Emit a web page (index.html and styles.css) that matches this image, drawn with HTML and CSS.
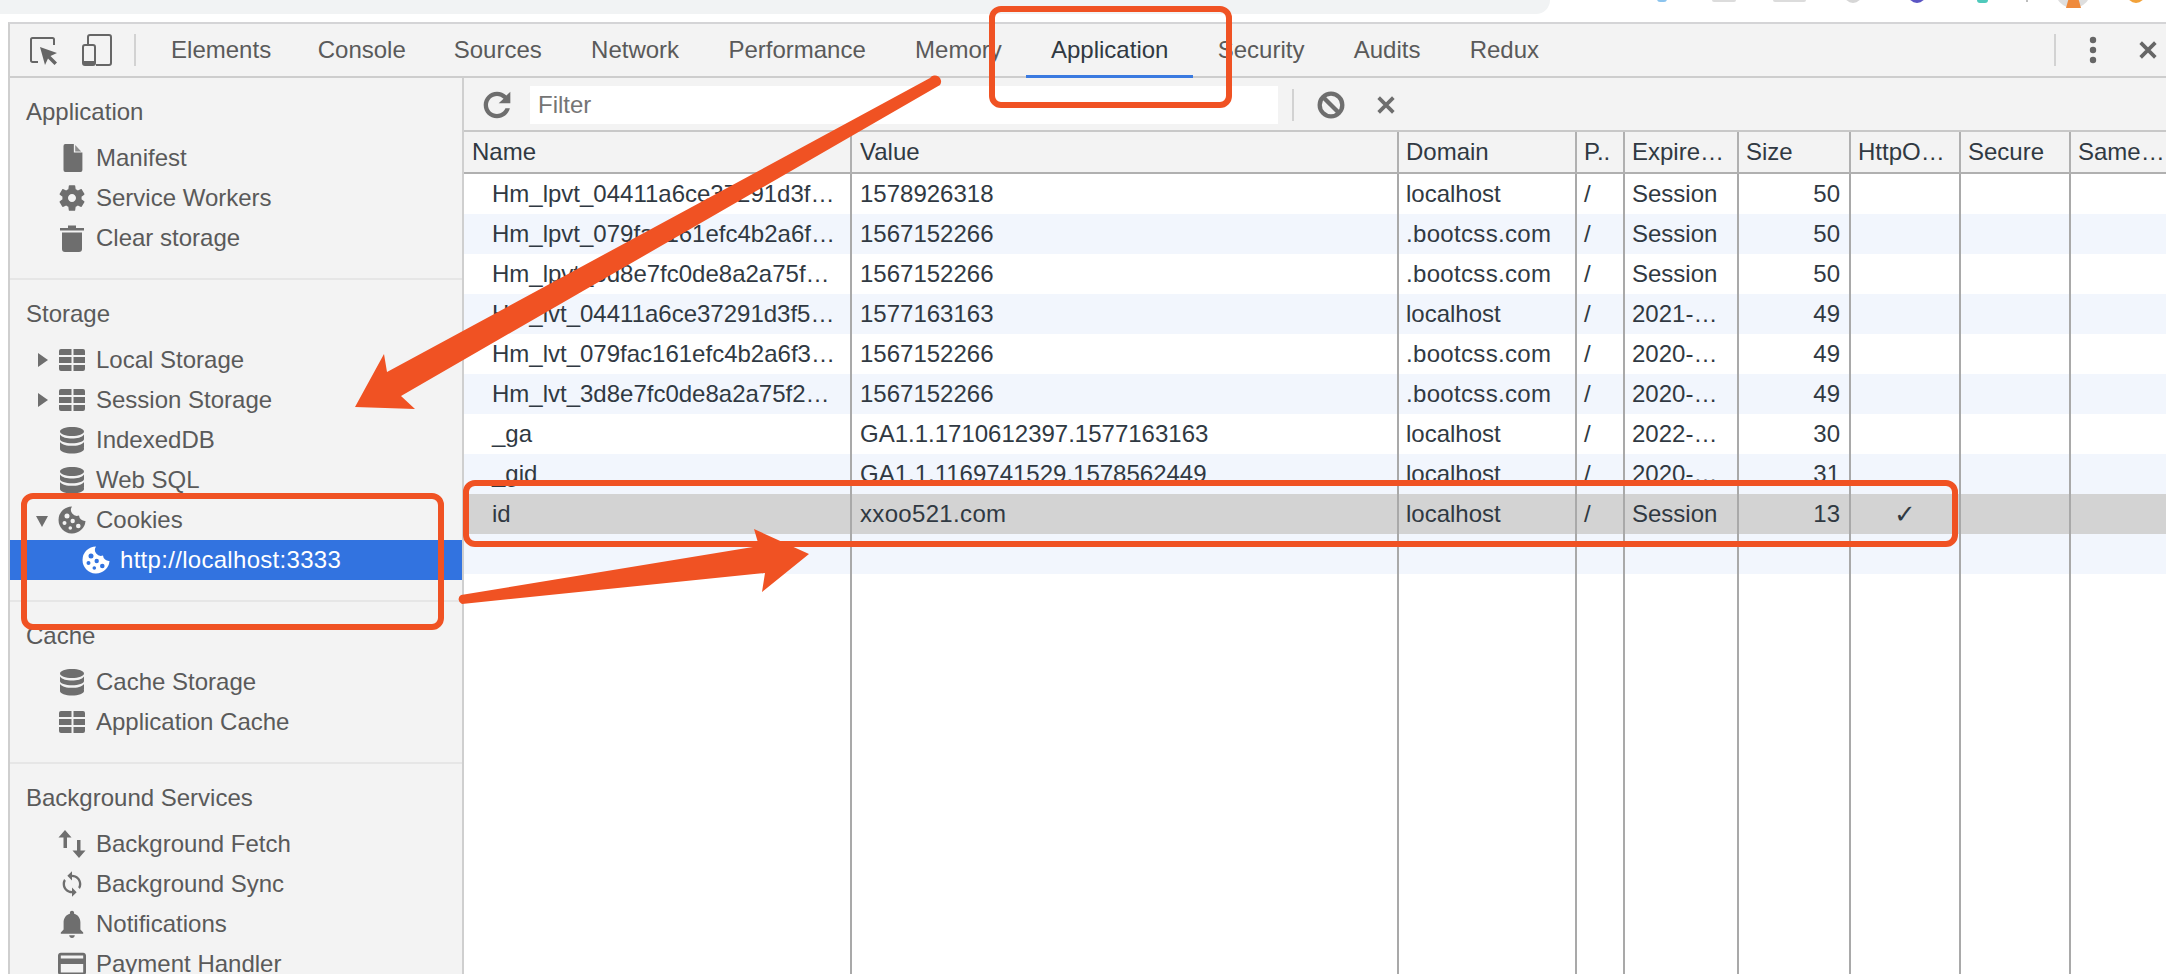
FILE: index.html
```
<!DOCTYPE html>
<html lang="en">
<head>
<meta charset="utf-8">
<title>DevTools - Application - Cookies</title>
<link rel="stylesheet" href="styles.css">
</head>
<body>
<svg class="sprite" aria-hidden="true">
  <symbol id="i-file" viewBox="0 0 28 28"><path d="M5 2a2 2 0 0 1 2-2h9.500v8.500H26V26a2 2 0 0 1-2 2H7a2 2 0 0 1-2-2z" transform="translate(1 0) scale(.9 1)"/><path d="M17.200 1l6 6.500h-6z" opacity=".75"/></symbol>
  <symbol id="i-gear" viewBox="1.500 1.500 21 21"><path d="M19.140 12.940c.04-.3.06-.61.06-.94 0-.32-.02-.64-.07-.94l2.030-1.580c.18-.14.23-.41.12-.61l-1.920-3.320c-.12-.22-.37-.29-.59-.22l-2.390.96c-.5-.38-1.030-.7-1.620-.94l-.36-2.540c-.04-.24-.24-.41-.48-.41h-3.840c-.24 0-.43.17-.47.41l-.36 2.540c-.59.24-1.130.57-1.620.94l-2.390-.96c-.22-.08-.47 0-.59.22L2.740 8.870c-.12.21-.08.47.12.61l2.030 1.580c-.05.3-.09.63-.09.94s.02.64.07.94l-2.030 1.580c-.18.14-.23.41-.12.61l1.920 3.320c.12.22.37.29.59.22l2.390-.96c.5.38 1.030.7 1.620.94l.36 2.540c.05.24.24.41.48.41h3.840c.24 0 .44-.17.47-.41l.36-2.540c.59-.24 1.130-.56 1.620-.94l2.390.96c.22.08.47 0 .59-.22l1.920-3.320c.12-.22.07-.47-.12-.61l-2.010-1.580zM12 15c-1.650 0-3-1.350-3-3s1.350-3 3-3 3 1.350 3 3-1.350 3-3 3z"/></symbol>
  <symbol id="i-trash" viewBox="0 0 28 28"><path d="M2 4h24v2.500H2zM10 1.500h8V4h-8zM4 8.500h20V25a3 3 0 0 1-3 3H7a3 3 0 0 1-3-3z"/></symbol>
  <symbol id="i-table" viewBox="0 0 28 28"><path d="M3 3h10.500v6H1V5a2 2 0 0 1 2-2zM15.500 3H25a2 2 0 0 1 2 2v4H15.500zM1 11h12.500v6H1zM15.500 11H27v6H15.500zM1 19h12.500v6H3a2 2 0 0 1-2-2zM15.500 19H27v4a2 2 0 0 1-2 2h-9.500z"/></symbol>
  <symbol id="i-db" viewBox="0 0 28 28"><path d="M14 1C7.500 1 2 3 2 5.500S7.500 10 14 10s12-2 12-4.500S20.500 1 14 1zM2 8.500c2 3 7 4 12 4s10-1 12-4V13c0 2.500-5.500 4.300-12 4.300S2 15.500 2 13zM2 16c2 3 7 3.800 12 3.800S24 19 26 16v4.500c0 .5 0 1-.2 1.500H26v1c0 2.500-5.500 4.500-12 4.500S2 25.500 2 23z"/></symbol>
  <symbol id="i-cookie" viewBox="0 0 28 28"><path fill-rule="evenodd" d="M14 .5A13.500 13.500 0 1 0 27.500 15a6 6 0 0 1-6.500-5.500A6 6 0 0 1 14 .5zM6.500 10a2.500 2.500 0 1 0 5 0a2.500 2.500 0 1 0-5 0zM4.500 17a2 2 0 1 0 4 0a2 2 0 1 0-4 0zM12.500 15a2.200 2.200 0 1 0 4.400 0a2.200 2.200 0 1 0-4.400 0zM18 20a2.300 2.300 0 1 0 4.600 0a2.300 2.300 0 1 0-4.600 0zM10.500 22a1.800 1.800 0 1 0 3.600 0a1.800 1.800 0 1 0-3.600 0z"/></symbol>
  <symbol id="i-fetch" viewBox="0 0 28 28"><path d="M7 0l6.500 7.500H9V18H5.500V7.500H.5zM21 28l-6.500-7.500H19V10h3.500v10.500H27.500z"/></symbol>
  <symbol id="i-sync" viewBox="0 0 24 24"><path d="M12 4V1L8 5l4 4V6c3.310 0 6 2.690 6 6 0 1.010-.25 1.970-.7 2.800l1.460 1.460C19.540 15.030 20 13.570 20 12c0-4.420-3.580-8-8-8zm0 14c-3.310 0-6-2.690-6-6 0-1.010.25-1.970.7-2.800L5.240 7.740C4.460 8.970 4 10.430 4 12c0 4.420 3.580 8 8 8v3l4-4-4-4v3z"/></symbol>
  <symbol id="i-bell" viewBox="2 2 20 20"><path d="M12 22c1.100 0 2-.9 2-2h-4c0 1.100.89 2 2 2zm6-6v-5c0-3.070-1.640-5.640-4.500-6.320V4c0-.83-.67-1.500-1.500-1.500s-1.500.67-1.500 1.500v.68C7.630 5.360 6 7.920 6 11v5l-2 2v1h16v-1l-2-2z"/></symbol>
  <symbol id="i-card" viewBox="2 2 20 20"><path d="M20 4H4c-1.110 0-1.990.89-1.990 2L2 18c0 1.110.89 2 2 2h16c1.110 0 2-.89 2-2V6c0-1.110-.89-2-2-2zm0 14H4v-6h16v6zm0-10H4V6h16v2z"/></symbol>
  <symbol id="i-close" viewBox="0 0 24 24"><path d="M4 4l16 16M20 4L4 20" fill="none" stroke="currentColor" stroke-width="4"/></symbol>
</svg>

<div class="browser-strip">
  <div class="tab-strip"></div>
  <svg class="browser-icons" width="616" height="22" viewBox="1550 0 616 22" aria-hidden="true">
    <rect x="1657" y="-6" width="10" height="8" rx="3" fill="#8cc4ee"/>
    <rect x="1712" y="-6" width="24" height="8" rx="2" fill="#dcdcdc"/>
    <rect x="1773" y="-6" width="33" height="8" rx="2" fill="#dcdcdc"/>
    <circle cx="1853" cy="-6" r="9" fill="#d6d6d6"/>
    <circle cx="1917" cy="-6" r="9" fill="#5b55c4"/>
    <rect x="1977" y="-4" width="11" height="7" rx="3" fill="#4fc9bb"/>
    <rect x="2026" y="-2" width="2" height="4" fill="#bdbdbd"/>
    <circle cx="2073" cy="-10" r="18" fill="#dedede"/>
    <path d="M2066 8l5-18h5l5 18z" fill="#ef8a3c"/>
    <circle cx="2136" cy="-6" r="9" fill="#f2a23a"/>
  </svg>
</div>

<div class="devtools">
  <header class="toolbar">
    <svg class="tool-inspect" width="28" height="28" viewBox="0 0 28 28" aria-hidden="true">
      <path d="M8 25H2.500a1.500 1.500 0 0 1-1.500-1.500v-21A1.500 1.500 0 0 1 2.500 1h20A1.500 1.500 0 0 1 24 2.500V8" fill="none" stroke="currentColor" stroke-width="2"/>
      <path d="M10 10l17 6-6.500 3 6.500 6.500-2.500 2.500-6.500-6.500-3 6.500z"/>
    </svg>
    <svg class="tool-device" width="30" height="32" viewBox="0 0 30 32" aria-hidden="true">
      <path d="M6 10V3a2 2 0 0 1 2-2h19a2 2 0 0 1 2 2v26a2 2 0 0 1-2 2H14" fill="none" stroke="currentColor" stroke-width="2"/>
      <rect x="1" y="11" width="12" height="20" rx="2" fill="none" stroke="currentColor" stroke-width="2"/>
      <rect x="1" y="27" width="12" height="4"/>
    </svg>
    <span class="tool-sep"></span>
    <nav class="tabs">
      <span class="tab tab-tight">Elements</span>
      <span class="tab tab-tight">Console</span>
      <span class="tab">Sources</span>
      <span class="tab">Network</span>
      <span class="tab">Performance</span>
      <span class="tab">Memory</span>
      <span class="tab tab-active">Application</span>
      <span class="tab">Security</span>
      <span class="tab">Audits</span>
      <span class="tab">Redux</span>
    </nav>
    <span class="tool-sep tool-sep-right"></span>
    <svg class="tool-more" width="8" height="28" viewBox="0 0 8 28" aria-hidden="true"><circle cx="4" cy="4" r="3.200"/><circle cx="4" cy="14" r="3.200"/><circle cx="4" cy="24" r="3.200"/></svg>
    <svg class="tool-close" width="22" height="22" aria-hidden="true"><use href="#i-close"/></svg>
  </header>

  <div class="panel">
    <aside class="sidebar">
      <section class="side-section">
        <h2 class="side-title">Application</h2>
        <div class="item"><span class="arrow"></span><svg class="ico"><use href="#i-file"/></svg><span>Manifest</span></div>
        <div class="item"><span class="arrow"></span><svg class="ico"><use href="#i-gear"/></svg><span>Service Workers</span></div>
        <div class="item"><span class="arrow"></span><svg class="ico"><use href="#i-trash"/></svg><span>Clear storage</span></div>
      </section>
      <section class="side-section">
        <h2 class="side-title">Storage</h2>
        <div class="item"><span class="arrow arrow-right"></span><svg class="ico"><use href="#i-table"/></svg><span>Local Storage</span></div>
        <div class="item"><span class="arrow arrow-right"></span><svg class="ico"><use href="#i-table"/></svg><span>Session Storage</span></div>
        <div class="item"><span class="arrow"></span><svg class="ico"><use href="#i-db"/></svg><span>IndexedDB</span></div>
        <div class="item"><span class="arrow"></span><svg class="ico"><use href="#i-db"/></svg><span>Web SQL</span></div>
        <div class="item"><span class="arrow arrow-down"></span><svg class="ico"><use href="#i-cookie"/></svg><span>Cookies</span></div>
        <div class="item item-child item-selected"><span class="arrow"></span><svg class="ico"><use href="#i-cookie"/></svg><span>http://localhost:3333</span></div>
      </section>
      <section class="side-section">
        <h2 class="side-title">Cache</h2>
        <div class="item"><span class="arrow"></span><svg class="ico"><use href="#i-db"/></svg><span>Cache Storage</span></div>
        <div class="item"><span class="arrow"></span><svg class="ico"><use href="#i-table"/></svg><span>Application Cache</span></div>
      </section>
      <section class="side-section">
        <h2 class="side-title">Background Services</h2>
        <div class="item"><span class="arrow"></span><svg class="ico"><use href="#i-fetch"/></svg><span>Background Fetch</span></div>
        <div class="item"><span class="arrow"></span><svg class="ico"><use href="#i-sync"/></svg><span>Background Sync</span></div>
        <div class="item"><span class="arrow"></span><svg class="ico"><use href="#i-bell"/></svg><span>Notifications</span></div>
        <div class="item"><span class="arrow"></span><svg class="ico"><use href="#i-card"/></svg><span>Payment Handler</span></div>
      </section>
    </aside>

    <main class="content">
      <div class="filter-bar">
        <svg class="filter-refresh" width="30" height="30" viewBox="3 3 18 18" aria-hidden="true"><path d="M17.650 6.350C16.200 4.900 14.210 4 12 4c-4.420 0-7.990 3.580-7.990 8s3.570 8 7.990 8c3.730 0 6.840-2.550 7.730-6h-2.680c-.82 2.030-2.740 3.400-5.050 3.400-3.010 0-5.400-2.390-5.400-5.400s2.390-5.400 5.400-5.400c1.560 0 2.940.64 3.920 1.680L13 11h7V4l-2.350 2.350z"/></svg>
        <div class="filter-input">Filter</div>
        <span class="filter-sep"></span>
        <svg class="filter-block" width="28" height="28" viewBox="0 0 26 26" aria-hidden="true"><circle cx="13" cy="13" r="10.500" fill="none" stroke="currentColor" stroke-width="4"/><path d="M6 6l14 14" stroke="currentColor" stroke-width="4"/></svg>
        <svg class="filter-clear" width="22" height="22" aria-hidden="true"><use href="#i-close"/></svg>
      </div>
      <div class="grid-wrap">
        <table class="grid">
          <colgroup>
            <col class="c-name"><col class="c-value"><col class="c-domain"><col class="c-path"><col class="c-exp"><col class="c-size"><col class="c-http"><col class="c-sec"><col class="c-same">
          </colgroup>
          <thead>
            <tr><th>Name</th><th>Value</th><th>Domain</th><th>P..</th><th>Expire…</th><th>Size</th><th>HttpO…</th><th>Secure</th><th>Same…</th></tr>
          </thead>
          <tbody>
            <tr><td class="name">Hm_lpvt_04411a6ce37291d3f…</td><td>1578926318</td><td>localhost</td><td>/</td><td>Session</td><td class="num">50</td><td></td><td></td><td></td></tr>
            <tr class="odd"><td class="name">Hm_lpvt_079fac161efc4b2a6f…</td><td>1567152266</td><td class="wide">.bootcss.com</td><td>/</td><td>Session</td><td class="num">50</td><td></td><td></td><td></td></tr>
            <tr><td class="name">Hm_lpvt_3d8e7fc0de8a2a75f…</td><td>1567152266</td><td class="wide">.bootcss.com</td><td>/</td><td>Session</td><td class="num">50</td><td></td><td></td><td></td></tr>
            <tr class="odd"><td class="name">Hm_lvt_04411a6ce37291d3f5…</td><td>1577163163</td><td>localhost</td><td>/</td><td>2021-…</td><td class="num">49</td><td></td><td></td><td></td></tr>
            <tr><td class="name">Hm_lvt_079fac161efc4b2a6f3…</td><td>1567152266</td><td class="wide">.bootcss.com</td><td>/</td><td>2020-…</td><td class="num">49</td><td></td><td></td><td></td></tr>
            <tr class="odd"><td class="name">Hm_lvt_3d8e7fc0de8a2a75f2…</td><td>1567152266</td><td class="wide">.bootcss.com</td><td>/</td><td>2020-…</td><td class="num">49</td><td></td><td></td><td></td></tr>
            <tr><td class="name">_ga</td><td>GA1.1.1710612397.1577163163</td><td>localhost</td><td>/</td><td>2022-…</td><td class="num">30</td><td></td><td></td><td></td></tr>
            <tr class="odd"><td class="name">_gid</td><td>GA1.1.1169741529.1578562449</td><td>localhost</td><td>/</td><td>2020-…</td><td class="num">31</td><td></td><td></td><td></td></tr>
            <tr class="selected"><td class="name">id</td><td class="wide">xxoo521.com</td><td>localhost</td><td>/</td><td>Session</td><td class="num">13</td><td class="check">✓</td><td></td><td></td></tr>
            <tr class="odd"><td></td><td></td><td></td><td></td><td></td><td></td><td></td><td></td><td></td></tr>
            <tr class="filler"><td></td><td></td><td></td><td></td><td></td><td></td><td></td><td></td><td></td></tr>
          </tbody>
        </table>
      </div>
    </main>
  </div>
</div>

<svg class="annotations" width="2166" height="974" viewBox="0 0 2166 974" aria-hidden="true">
  <rect class="note-box" x="992" y="9" width="237" height="96" rx="9"/>
  <rect class="note-box" x="24" y="496" width="417" height="131" rx="9"/>
  <rect class="note-box" x="466" y="483" width="1489" height="61" rx="9"/>
  <path class="note-arrow" d="M930 78a6 6 0 0 1 10 7L401 396l14 13-60-2 29-53 3 18z"/>
  <path class="note-arrow" d="M461 595l298-49-5-17 55 25-47 38 3-19-303 31a5 5 0 0 1-1-9z"/>
</svg>
</body>
</html>
```
FILE: styles.css
```
* {
  box-sizing: border-box;
}

html,
body {
  margin: 0;
  height: 100%;
}

body {
  position: relative;
  display: flex;
  flex-direction: column;
  width: 2166px;
  height: 974px;
  overflow: hidden;
  background: #fff;
  font-family: "Liberation Sans", Arial, sans-serif;
  font-size: 24px;
  color: #5a5a5a;
}

.sprite {
  display: none;
}

/* browser chrome remnant */
.browser-strip {
  display: flex;
  flex: none;
  height: 22px;
}

.tab-strip {
  width: 1550px;
  height: 14px;
  background: #f1f3f4;
  border-bottom-right-radius: 14px;
}

.browser-icons {
  flex: none;
}

/* devtools frame */
.devtools {
  display: flex;
  flex: 1;
  flex-direction: column;
  min-height: 0;
  margin-left: 8px;
  border-top: 2px solid #d4d4d6;
  border-left: 2px solid #cfcfcf;
}

.toolbar {
  display: flex;
  flex: none;
  align-items: center;
  height: 54px;
  background: #f3f3f3;
  border-bottom: 2px solid #cdcdcd;
  fill: #666;
  color: #666;
}

.tool-inspect {
  flex: none;
  margin: 1px 0 0 20px;
}

.tool-device {
  flex: none;
  margin-left: 24px;
}

.tool-sep {
  flex: none;
  width: 2px;
  height: 32px;
  margin-left: 22px;
  background: #d2d2d2;
}

.tabs {
  display: flex;
  flex: 1;
  align-self: stretch;
  margin-left: 11.800px;
}

.tab {
  display: flex;
  align-items: center;
  margin-bottom: -2px;
  padding: 0 24.650px 2px;
  color: #5a5a5a;
  white-space: nowrap;
}

.tab-tight {
  padding-right: 23.300px;
  padding-left: 23.300px;
}

.tab-active {
  border-bottom: 3px solid #3a7ae0;
  padding-bottom: 0;
  color: #303942;
}

.tool-sep-right {
  margin: 0 33px 0 0;
}

.tool-more {
  flex: none;
  margin-right: 40px;
}

.tool-close {
  flex: none;
  margin-right: 7px;
}

/* main panel */
.panel {
  display: flex;
  flex: 1;
  min-height: 0;
}

.sidebar {
  flex: none;
  width: 454px;
  overflow: hidden;
  background: #f3f3f3;
  border-right: 2px solid #cfcfcf;
}

.side-section {
  padding: 14px 0 20px;
  border-bottom: 2px solid #e6e6e6;
}

.side-title {
  height: 40px;
  margin: 0 0 6px;
  padding-left: 16px;
  font-size: 24px;
  font-weight: 400;
  line-height: 40px;
}

.item {
  display: flex;
  align-items: center;
  height: 40px;
  padding-left: 24px;
  white-space: nowrap;
}

.item-child {
  padding-left: 48px;
}

.item-selected {
  background: #3273e0;
  color: #fff;
  letter-spacing: .3px;
}

.arrow {
  flex: none;
  width: 24px;
}

.arrow-right {
  width: 0;
  height: 0;
  margin: 0 10px 0 4px;
  border-style: solid;
  border-width: 7.500px 0 7.500px 10px;
  border-color: transparent transparent transparent #6e6e6e;
}

.arrow-down {
  width: 0;
  height: 0;
  margin: 2px 10px 0 2px;
  border-style: solid;
  border-width: 11px 6.500px 0;
  border-color: #6e6e6e transparent transparent;
}

.ico {
  flex: none;
  width: 28px;
  height: 28px;
  margin-right: 10px;
  fill: #6e6e6e;
}

.item-selected .ico {
  fill: #fff;
}

/* content */
.content {
  display: flex;
  flex: 1;
  flex-direction: column;
  min-width: 0;
  background: #fff;
}

.filter-bar {
  display: flex;
  flex: none;
  align-items: center;
  height: 54px;
  padding-top: 2px;
  background: #f3f3f3;
  border-bottom: 2px solid #c8c8c8;
  color: #6e6e6e;
  fill: #6e6e6e;
}

.filter-refresh {
  flex: none;
  margin-left: 18px;
}

.filter-input {
  flex: none;
  width: 748px;
  height: 38px;
  margin: 0 0 0 18px;
  padding-left: 8px;
  background: #fff;
  color: #757575;
  line-height: 38px;
}

.filter-sep {
  flex: none;
  width: 2px;
  height: 32px;
  margin-left: 14px;
  background: #d2d2d2;
}

.filter-block {
  flex: none;
  margin-left: 23px;
}

.filter-clear {
  flex: none;
  margin-left: 30px;
}

.grid-wrap {
  flex: 1;
  min-height: 0;
  overflow: hidden;
}

.grid {
  width: 1702px;
  height: 100%;
  border-collapse: separate;
  border-spacing: 0;
  table-layout: fixed;
  color: #303942;
}

.c-name { width: 386px; }
.c-value { width: 547px; }
.c-domain { width: 178px; }
.c-path { width: 48px; }
.c-exp { width: 114px; }
.c-size { width: 112px; }
.c-http { width: 110px; }
.c-sec { width: 110px; }
.c-same { width: 97px; }

.grid th,
.grid td {
  padding: 0 0 0 7px;
  overflow: hidden;
  font-weight: 400;
  text-align: left;
  white-space: nowrap;
  border-left: 2px solid #a9a9a9;
}

.grid th:first-child,
.grid td:first-child {
  border-left: 0;
  padding-left: 8px;
}

.grid th:nth-child(2),
.grid td:nth-child(2) {
  padding-left: 8px;
}

.grid thead tr {
  height: 42px;
}

.grid th {
  background: #f3f3f3;
  border-bottom: 2px solid #b0b0b0;
}

.grid th:not(:first-child) {
  border-left-color: #b0b0b0;
}

.grid tbody tr {
  height: 40px;
}

.grid tbody tr.filler {
  height: auto;
}

.grid tr.odd td {
  background: #f2f6fd;
}

.grid tr.selected td {
  background: #d3d3d3;
}

.grid td.name {
  padding-left: 28px;
}

.grid td.wide {
  letter-spacing: .33px;
}

.grid td.num {
  padding: 0 9px 0 0;
  text-align: right;
}

.grid td.check {
  padding: 0;
  font-family: "DejaVu Sans", sans-serif;
  font-size: 26px;
  text-align: center;
}

/* red markup drawn over the screenshot */
.annotations {
  position: absolute;
  top: 0;
  left: 0;
  pointer-events: none;
}

.note-box {
  fill: none;
  stroke: #f05223;
  stroke-width: 6;
}

.note-arrow {
  fill: #f05223;
}
```
